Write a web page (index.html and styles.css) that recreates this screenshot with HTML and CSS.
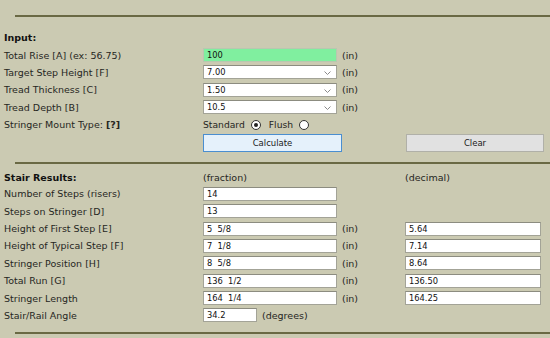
FILE: index.html
```html
<!DOCTYPE html>
<html lang="en">
<head>
  <meta charset="UTF-8" />
  <meta name="viewport" content="width=device-width, initial-scale=1.0" />
  <title>Stair Calculator</title>
  <link rel="stylesheet" href="styles.css">
</head>
<body>
  <div class="page">
    <div class="rule"></div>

    <form class="calc input-section" id="stair-form">
      <div class="heading">Input:</div>
      <div></div><div></div><div></div>

      <label for="rise">Total Rise [A] (ex: 56.75)</label>
      <input type="text" id="rise" class="field field-active" value="100" />
      <span class="unit">(in)</span>
      <div></div>

      <label for="step">Target Step Height [F]</label>
      <div class="select-wrap">
        <select id="step" class="field">
          <option>7.00</option>
          <option>7.25</option>
          <option>7.50</option>
        </select>
        <svg class="chevron" width="7" height="4" viewBox="0 0 7 4"><path d="M0.5 0.5 L3.5 3.5 L6.5 0.5" fill="none" stroke="#8a8a8a" stroke-width="1"/></svg>
      </div>
      <span class="unit">(in)</span>
      <div></div>

      <label for="thick">Tread Thickness [C]</label>
      <div class="select-wrap">
        <select id="thick" class="field">
          <option>1.50</option>
          <option>1.00</option>
        </select>
        <svg class="chevron" width="7" height="4" viewBox="0 0 7 4"><path d="M0.5 0.5 L3.5 3.5 L6.5 0.5" fill="none" stroke="#8a8a8a" stroke-width="1"/></svg>
      </div>
      <span class="unit">(in)</span>
      <div></div>

      <label for="depth">Tread Depth [B]</label>
      <div class="select-wrap">
        <select id="depth" class="field">
          <option>10.5</option>
          <option>11</option>
        </select>
        <svg class="chevron" width="7" height="4" viewBox="0 0 7 4"><path d="M0.5 0.5 L3.5 3.5 L6.5 0.5" fill="none" stroke="#8a8a8a" stroke-width="1"/></svg>
      </div>
      <span class="unit">(in)</span>
      <div></div>

      <span class="label">Stringer Mount Type: <strong>[?]</strong></span>
      <div class="mount">
        <label>Standard <input type="radio" name="mount" value="standard" checked /></label>
        <label>Flush <input type="radio" name="mount" value="flush" /></label>
      </div>
      <div></div><div></div>

      <div></div>
      <button type="submit" class="btn btn-calc">Calculate</button>
      <div></div>
      <button type="reset" class="btn btn-clear">Clear</button>
    </form>

    <div class="rule"></div>

    <div class="calc results">
      <div class="heading">Stair Results:</div>
      <span class="col-title">(fraction)</span>
      <div></div>
      <span class="col-title">(decimal)</span>

      <span class="label">Number of Steps (risers)</span>
      <input type="text" class="field" value="14" readonly />
      <div></div><div></div>

      <span class="label">Steps on Stringer [D]</span>
      <input type="text" class="field" value="13" readonly />
      <div></div><div></div>

      <span class="label">Height of First Step [E]</span>
      <input type="text" class="field" value="5  5/8" readonly />
      <span class="unit">(in)</span>
      <input type="text" class="field field-wide" value="5.64" readonly />

      <span class="label">Height of Typical Step [F]</span>
      <input type="text" class="field" value="7  1/8" readonly />
      <span class="unit">(in)</span>
      <input type="text" class="field field-wide" value="7.14" readonly />

      <span class="label">Stringer Position [H]</span>
      <input type="text" class="field" value="8  5/8" readonly />
      <span class="unit">(in)</span>
      <input type="text" class="field field-wide" value="8.64" readonly />

      <span class="label">Total Run [G]</span>
      <input type="text" class="field" value="136  1/2" readonly />
      <span class="unit">(in)</span>
      <input type="text" class="field field-wide" value="136.50" readonly />

      <span class="label">Stringer Length</span>
      <input type="text" class="field" value="164  1/4" readonly />
      <span class="unit">(in)</span>
      <input type="text" class="field field-wide" value="164.25" readonly />

      <span class="label">Stair/Rail Angle</span>
      <div class="angle">
        <input type="text" class="field field-short" value="34.2" readonly />
        <span>(degrees)</span>
      </div>
      <div></div><div></div>
    </div>

    <div class="rule"></div>
  </div>
</body>
</html>
```

FILE: styles.css
```css
body {
  margin: 0;
  padding: 0;
  background: #cbcab2;
  font-family: "DejaVu Sans", Verdana, sans-serif;
  font-size: 9.5px;
  color: #26261e;
  overflow: hidden;
}
.page {
  padding-top: 15px;
}
.rule {
  height: 2px;
  margin-left: 15px;
  background: #6a6944;
}
.calc {
  display: grid;
  grid-template-columns: 199px 134px 68px 136px;
  grid-auto-rows: 17.4px;
  align-items: center;
  padding-left: 4px;
}
.input-section {
  padding-top: 12px;
  padding-bottom: 11px;
}
.input-section > :nth-last-child(-n+4) {
  align-self: start;
}
.results {
  padding-top: 7px;
  padding-bottom: 8px;
  grid-template-rows: 14.3px;
}
.heading {
  font-weight: bold;
  color: #111;
}
.unit {
  padding-left: 5px;
}
.field {
  box-sizing: border-box;
  width: 134px;
  height: 14px;
  margin: 0;
  padding: 0 3px;
  border: 1px solid #a3a397;
  border-top-color: #8c8c80;
  background: #fff;
  font-family: "DejaVu Sans", Verdana, sans-serif;
  font-size: 8.3px;
  color: #111;
  outline: none;
}
.field-active {
  background: #80ef9f;
  border-color: #b9c7b0;
}
.field-wide {
  width: 136px;
}
.field-short {
  width: 54px;
}
.select-wrap {
  position: relative;
  height: 14px;
}
.select-wrap select {
  appearance: none;
  -webkit-appearance: none;
  border-radius: 0;
}
.chevron {
  position: absolute;
  right: 6px;
  top: 6px;
  pointer-events: none;
}
.mount {
  display: flex;
  gap: 8px;
  white-space: nowrap;
  font-size: 9.2px;
}
.mount label {
  display: flex;
  align-items: center;
  gap: 6px;
}
.mount input {
  appearance: none;
  -webkit-appearance: none;
  width: 10px;
  height: 10px;
  margin: 0;
  border: 1px solid #333;
  border-radius: 50%;
  background: #fff;
  position: relative;
}
.mount input:checked::after {
  content: "";
  position: absolute;
  left: 2px;
  top: 2px;
  width: 4px;
  height: 4px;
  border-radius: 50%;
  background: #222;
}
.btn {
  box-sizing: border-box;
  height: 18px;
  margin-top: 0.2px;
  padding: 0;
  font-family: "DejaVu Sans", Verdana, sans-serif;
  font-size: 8.5px;
  color: #1a1a1a;
  cursor: pointer;
}
.btn-calc {
  width: 139px;
  background: #e5f1fb;
  border: 1px solid #4a8ed0;
}
.btn-clear {
  width: 138px;
  margin-left: 1px;
  background: #e1e1e1;
  border: 1px solid #b0b0a8;
}
.angle {
  display: flex;
  align-items: center;
  gap: 5px;
  white-space: nowrap;
}
```
